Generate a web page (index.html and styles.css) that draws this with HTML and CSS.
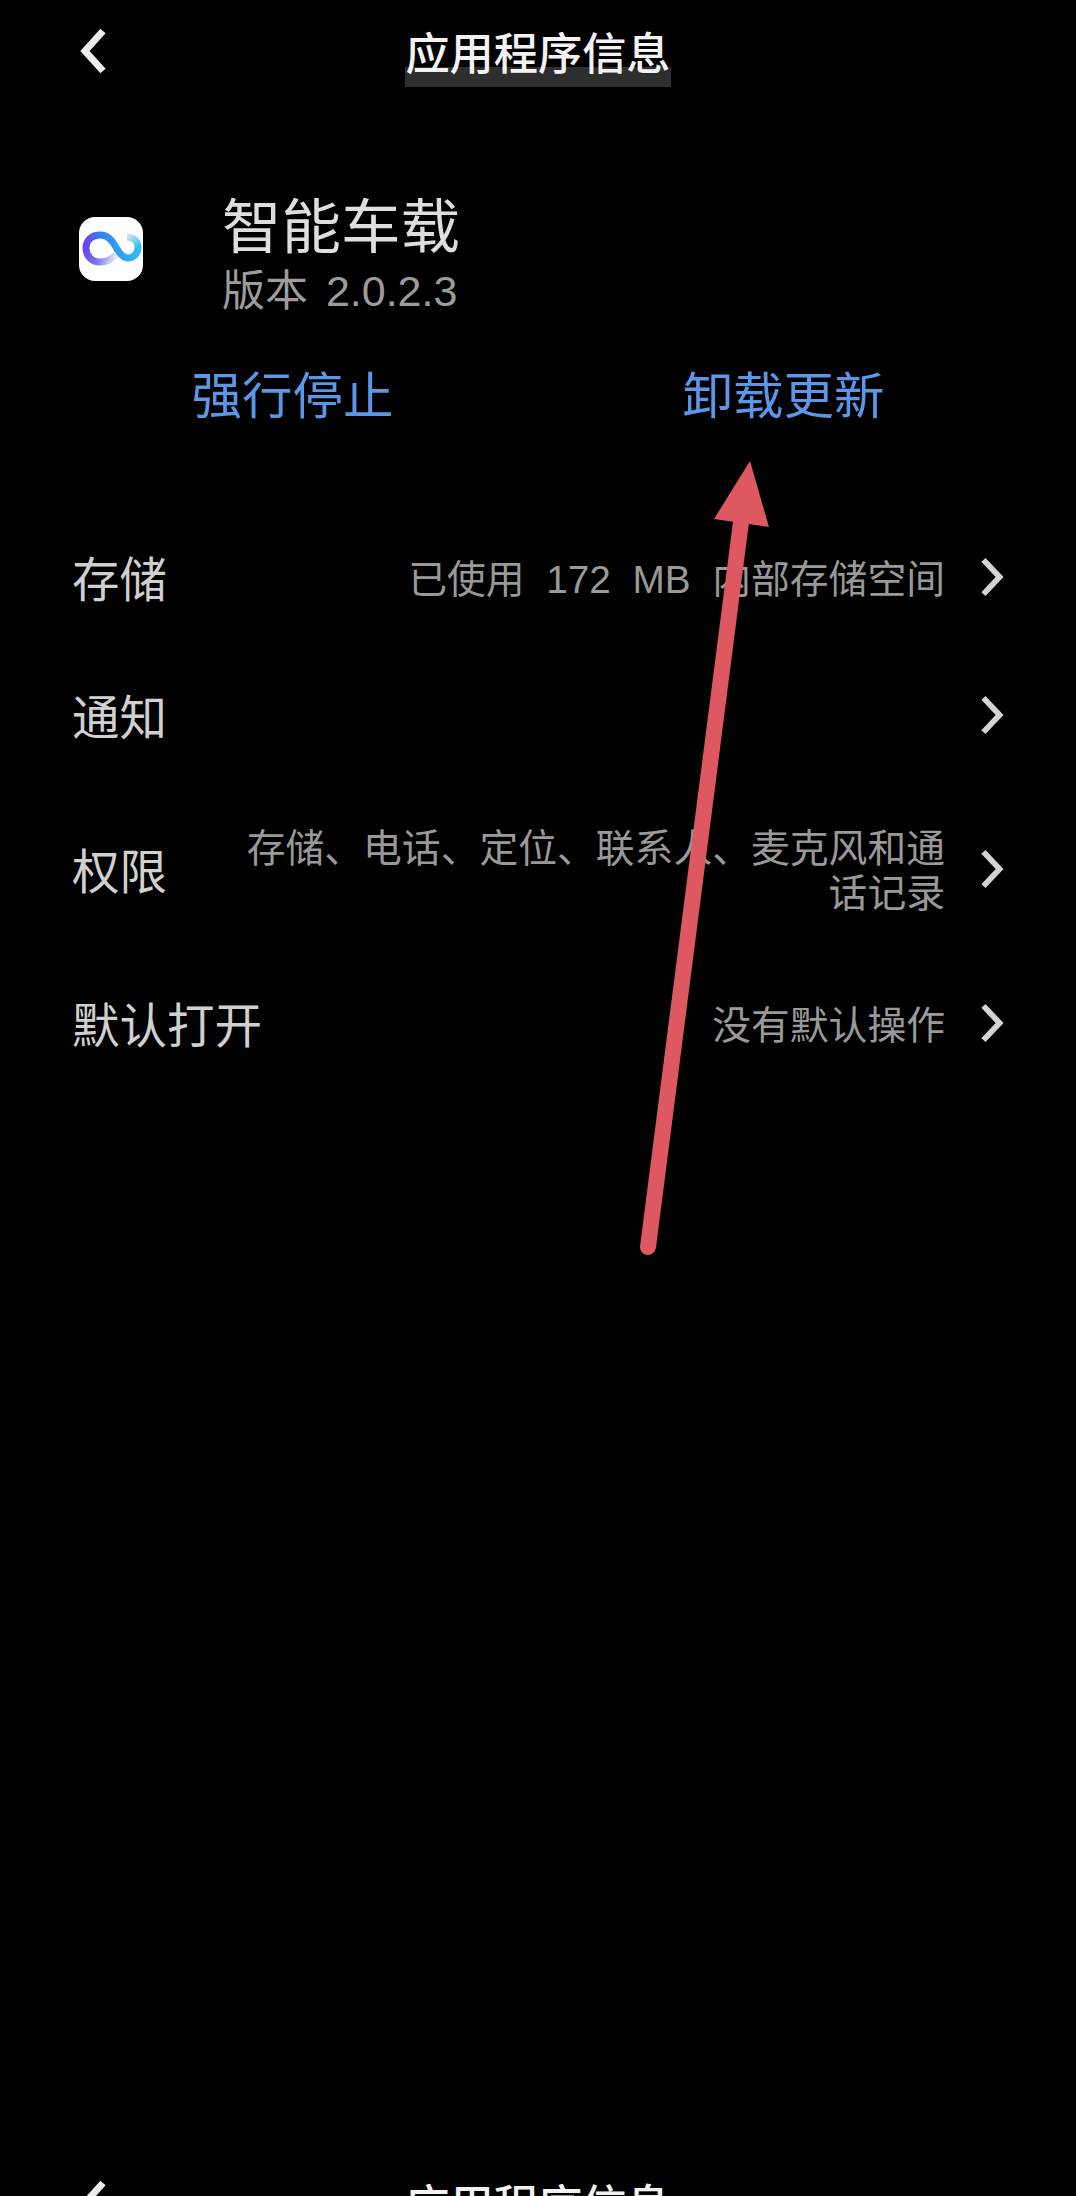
FILE: index.html
```html
<!DOCTYPE html>
<html>
<head>
  <meta charset="utf-8">
  <link rel="stylesheet" href="styles.css">
</head>
<body>
  <div class="screen">
    <div class="appbar">
      <svg class="back" viewBox="0 0 30 48"><path d="M24 4 L6 24 L24 44"/></svg>
      <h1 class="title">应用程序信息</h1>
    </div>

    <div class="app-head">
      <div class="app-icon">
        <svg viewBox="0 0 64 64">
          <defs>
            <linearGradient id="loopLow" gradientUnits="userSpaceOnUse" x1="7" y1="31" x2="37" y2="40">
              <stop offset="0" stop-color="#6a45e8"/>
              <stop offset="0.5" stop-color="#7f7cf0"/>
              <stop offset="1" stop-color="#e4ebfb"/>
            </linearGradient>
            <linearGradient id="loopMain" gradientUnits="userSpaceOnUse" x1="7" y1="31" x2="59" y2="31">
              <stop offset="0" stop-color="#6a45e8"/>
              <stop offset="0.3" stop-color="#2f86f2"/>
              <stop offset="1" stop-color="#2fbdf3"/>
            </linearGradient>
            <linearGradient id="loopEnd" gradientUnits="userSpaceOnUse" x1="59" y1="31" x2="48" y2="19">
              <stop offset="0" stop-color="#2fbdf3"/>
              <stop offset="1" stop-color="#d4e8fa"/>
            </linearGradient>
          </defs>
          <path class="loop" stroke="url(#loopLow)" d="M37 38 C32 43 27 45 21 45 C12 45 7 38 7 31"/>
          <path class="loop" stroke="url(#loopMain)" d="M7 31 C7 23 13 18 21 18 C30 18 34 25 38 32 C41 37 44 41 49 41 C55 41 59 36 59 31"/>
          <path class="loop" stroke="url(#loopEnd)" d="M59 31 C59 25 55 20 48 20"/>
        </svg>
      </div>
      <div class="app-text">
        <div class="app-name">智能车载</div>
        <div class="app-version">版本  2.0.2.3</div>
      </div>
    </div>

    <div class="actions">
      <a class="action">强行停止</a>
      <a class="action">卸载更新</a>
    </div>

    <div class="list">
      <div class="row">
        <span class="row-label">存储</span>
        <span class="row-value">已使用  172  MB  内部存储空间</span>
        <svg class="more" viewBox="0 0 26 42"><path d="M4 3 L21 21 L4 39"/></svg>
      </div>
      <div class="row">
        <span class="row-label">通知</span>
        <span class="row-value"></span>
        <svg class="more" viewBox="0 0 26 42"><path d="M4 3 L21 21 L4 39"/></svg>
      </div>
      <div class="row row-tall">
        <span class="row-label">权限</span>
        <span class="row-value">存储、电话、定位、联系人、麦克风和通话记录</span>
        <svg class="more" viewBox="0 0 26 42"><path d="M4 3 L21 21 L4 39"/></svg>
      </div>
      <div class="row">
        <span class="row-label">默认打开</span>
        <span class="row-value">没有默认操作</span>
        <svg class="more" viewBox="0 0 26 42"><path d="M4 3 L21 21 L4 39"/></svg>
      </div>
    </div>

    <!-- red annotation arrow on top of the page -->
    <svg class="arrow" viewBox="0 0 1076 2196">
      <path class="arrow-shaft" d="M741 522 L648 1247"/>
      <polygon class="arrow-head" points="750,461 769,527 714,519"/>
    </svg>
  </div>

  <!-- next stitched screen, cut off by the bottom of the picture -->
  <div class="appbar">
    <svg class="back" viewBox="0 0 30 48"><path d="M24 4 L6 24 L24 44"/></svg>
    <h1 class="title">应用程序信息</h1>
  </div>
</body>
</html>
```

FILE: styles.css
```css
* {
  margin: 0;
  padding: 0;
  box-sizing: border-box;
}
html, body {
  height: 2196px;
  overflow: hidden;
  background: #000;
}
body {
  font-family: "Noto Sans CJK SC", "Noto Sans", sans-serif;
  color: #e6e6e6;
}
.screen {
  position: relative;
  height: 2152px;
}
.appbar {
  display: grid;
  grid-template-columns: 1fr auto 1fr;
  align-items: start;
  height: 104px;
  padding: 27px 0 0 79px;
}
.back {
  width: 30px;
  height: 48px;
  fill: none;
  stroke: #ececec;
  stroke-width: 7;
}
.title {
  grid-column: 2;
  height: 60px;
  margin-left: -79px;
  font-size: 44.2px;
  line-height: 48px;
  font-weight: 500;
  color: #f2f2f2;
  background: linear-gradient(transparent 40px, #2e2e2e 40px);
}
.app-head {
  display: flex;
  align-items: flex-start;
  gap: 79px;
  margin-top: 85px;
  padding-left: 79px;
}
.app-icon {
  width: 64px;
  height: 64px;
  margin-top: 28px;
  background: #fff;
  border-radius: 16px;
}
.app-icon svg {
  display: block;
  width: 64px;
  height: 64px;
}
.loop {
  fill: none;
  stroke-width: 7;
}
.app-name {
  font-size: 59.5px;
  line-height: 66px;
  color: #dedede;
}
.app-version {
  margin-top: 11px;
  font-family: "Liberation Sans", "Noto Sans CJK SC", sans-serif;
  font-size: 43px;
  line-height: 50px;
  word-spacing: -3px;
  color: #9c9c9c;
  white-space: pre;
}
.actions {
  display: grid;
  grid-template-columns: 1fr 1fr;
  margin-top: 46px;
  padding: 0 47px;
}
.action {
  text-align: center;
  font-size: 50.5px;
  line-height: 60px;
  color: #5b97e8;
}
.list {
  margin-top: 86px;
}
.row {
  display: flex;
  align-items: center;
  min-height: 138px;
  padding: 0 71px 0 72px;
}
.row-tall {
  padding-top: 38px;
  padding-bottom: 38px;
}
.row-label {
  flex: none;
  font-size: 47.5px;
  line-height: 60px;
  color: #d0d0d0;
}
.row-value {
  flex: 1;
  margin-left: 70px;
  padding-top: 4px;
  font-family: "Liberation Sans", "Noto Sans CJK SC", sans-serif;
  font-size: 38.8px;
  line-height: 45px;
  text-align: right;
  color: #999;
  white-space: pre-wrap;
}
.more {
  flex: none;
  width: 26px;
  height: 40px;
  margin-left: 34px;
  fill: none;
  stroke: #d4d4d4;
  stroke-width: 6;
}
.arrow {
  position: absolute;
  top: 0;
  left: 0;
  width: 1076px;
  height: 2196px;
}
.arrow-shaft {
  stroke: #dd5860;
  stroke-width: 16;
  stroke-linecap: round;
}
.arrow-head {
  fill: #dd5860;
}
```
